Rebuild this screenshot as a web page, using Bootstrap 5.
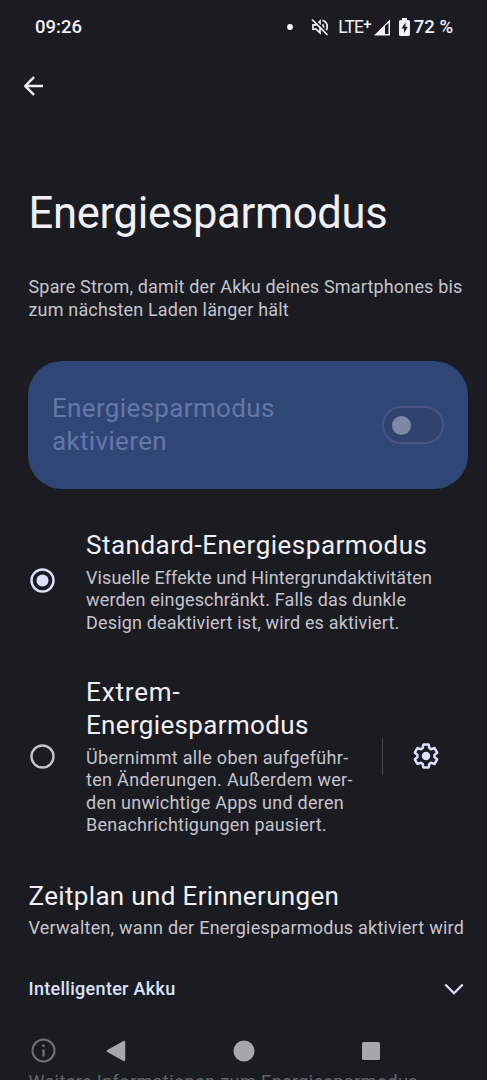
<!DOCTYPE html>
<html lang="de">
<head>
<meta charset="utf-8">
<meta name="viewport" content="width=device-width, initial-scale=1">
<title>Energiesparmodus</title>
<link rel="stylesheet" href="https://cdn.jsdelivr.net/npm/bootstrap@5.3.0/dist/css/bootstrap.min.css">
<style>
  body { background:#1b1c21; color:#f1f0f7; font-family:Roboto,"Liberation Sans",sans-serif; }
  .screen { width:487px; height:1080px; background:#1b1c21; }
  .screen svg { display:block; flex:none; }
  .statusbar { height:54px; padding:0 34px 0 35px; font-size:18.5px; font-weight:500; line-height:54px; }
  .notif { margin-right:18px; }
  .network { font-size:17.5px; font-weight:400; letter-spacing:-.8px; margin:0 3px 0 9px; }
  .network sup { font-size:15px; top:-.28em; font-weight:500; }
  .charge { margin:0 4px 0 8px; }
  .toolbar { height:64px; padding:0 24px; }
  .page-title { font-size:43.5px; line-height:56px; font-weight:400; letter-spacing:-.28px; margin:68px 0 0; padding-left:28.5px; white-space:nowrap; }
  .copy { font-size:18px; line-height:22.5px; letter-spacing:.17px; color:#c5c4cd; margin:0; }
  .copy span, .heading26 span { display:table; white-space:nowrap; }
  .copy .loose { letter-spacing:.31px; }
  .copy .mid { letter-spacing:.24px; }
  .copy .tight { letter-spacing:.12px; }
  .heading26 { font-size:26px; line-height:33px; font-weight:400; letter-spacing:.34px; margin:0; }
  .heading26 .loose { letter-spacing:.5px; }
  .heading26 .looser { letter-spacing:.85px; }
  .heading26 + .copy { margin-top:4.5px; }
  .intro { margin:34px 0 0 28.5px; }
  .main-switch { margin:40px 19px 0 28px; height:128px; border-radius:34px; background:#304677; padding:0 24px; color:#6577a9; }
  .toggle { width:62px; height:38px; border:2px solid #475485; border-radius:19px; background:#31426f; padding-left:8px; }
  .knob { width:19px; height:19px; background:#7d87a8; }
  .choice { padding-left:28px; margin-top:42px; }
  .choice-mark { width:58px; padding-left:2px; }
  .choice-text { width:296px; }
  .choice.active { margin-top:40px; }
  .choice.active .choice-mark { padding-bottom:2px; }
  .split { width:1px; height:37px; background:#45464f; margin-right:30px; }
  .schedule { padding:43px 0 0 28.5px; }
  .smart { font-size:18px; font-weight:500; line-height:24px; letter-spacing:.3px; color:#dde1ff; padding:37px 23px 0 28.5px; }
  .hint { padding:37px 0 0 28.5px; }
  .hint .copy { margin-top:8.5px; color:#63646f; letter-spacing:.42px; }
  .hint svg { margin-left:2px; }
  .navkeys { height:58px; padding:0 107px 0 106px; }
  .navkeys .home { margin-right:1px; }
</style>
</head>
<body>
<div class="screen position-relative overflow-hidden">
  <header class="statusbar d-flex align-items-center">
    <span class="me-auto">09:26</span>
    <svg class="notif" width="6" height="6"><circle cx="3" cy="3" r="2.9" fill="#fff"/></svg>
    <svg width="18" height="18" viewBox="0 0 18 18" fill="none" stroke="#f1f0f7" stroke-width="1.700"><path d="M2 6.800h3l4-3.600v11.600l-4-3.600H2zM11.500 6.200q2.200 2.800 0 5.600M11.500 2.300q5 1.900 4.700 6.700-.1 2-1 3.500"/><path d="M2.500 .8l15 15" stroke="#1b1c21" stroke-width="1.600"/><path d="M1 1.500l15.500 15.500"/></svg>
    <span class="network">LTE<sup>+</sup></span>
    <svg width="17" height="17" viewBox="0 0 17 17"><path d="M0 16.500L16 .5v16zM11 7v8h3.500V4z" fill-rule="evenodd" fill="#f1f0f7"/></svg>
    <svg class="charge" width="11" height="18" viewBox="0 0 11 18"><path d="M3 0h5v2h1.500Q11 2 11 3.500v13Q11 18 9.500 18h-8Q0 18 0 16.500v-13Q0 2 1.500 2H3z" fill="#f1f0f7"/><path d="M6.500 4.500L2.500 10.500h2.500V15l3.700-6H6.500z" fill="#1b1c21"/></svg>
    <span>72 %</span>
  </header>
  <div class="toolbar d-flex align-items-center"><svg width="20" height="20" viewBox="0 0 20 20" fill="none" stroke="#f1f0f7" stroke-width="2.400"><path d="M19 10H1.500M10 1.200L1.300 10l8.700 8.800"/></svg></div>
  <h1 class="page-title">Energiesparmodus</h1>
  <p class="copy intro"><span>Spare Strom, damit der Akku deines Smartphones bis</span><span>zum nächsten Laden länger hält</span></p>
  <section class="main-switch d-flex align-items-center justify-content-between">
    <h2 class="heading26"><span>Energiesparmodus</span><span>aktivieren</span></h2>
    <div class="toggle d-flex align-items-center"><div class="knob rounded-circle"></div></div>
  </section>
  <section class="choice active d-flex align-items-center">
    <div class="choice-mark"><svg width="25" height="25"><circle cx="12.500" cy="12.500" r="11" fill="none" stroke="#dde1ff" stroke-width="2.400"/><circle cx="12.500" cy="12.500" r="6" fill="#dde1ff"/></svg></div>
    <div><h2 class="heading26"><span class="loose">Standard-Energiesparmodus</span></h2>
    <p class="copy"><span class="tight">Visuelle Effekte und Hintergrundaktivitäten</span><span>werden eingeschränkt. Falls das dunkle</span><span>Design deaktiviert ist, wird es aktiviert.</span></p></div>
  </section>
  <section class="choice d-flex align-items-center">
    <div class="choice-mark"><svg width="25" height="25"><circle cx="12.500" cy="12.500" r="11" fill="none" stroke="#c5c4cd" stroke-width="2.400"/></svg></div>
    <div class="choice-text"><h2 class="heading26"><span class="looser">Extrem-</span><span>Energiesparmodus</span></h2>
    <p class="copy"><span class="loose">Übernimmt alle oben aufgeführ-</span><span class="loose">ten Änderungen. Außerdem wer-</span><span class="mid">den unwichtige Apps und deren</span><span class="mid">Benachrichtigungen pausiert.</span></p></div>
    <div class="split"></div>
    <svg width="26" height="26" viewBox="0.600 0.600 22.800 22.800"><path d="M19.430 12.980c.04-.32.07-.64.07-.98 0-.34-.03-.66-.07-.98l2.110-1.650c.19-.15.24-.42.12-.64l-2-3.460c-.09-.16-.26-.25-.44-.25-.06 0-.12.01-.17.03l-2.490 1c-.52-.4-1.080-.73-1.690-.98l-.38-2.650C14.460 2.180 14.250 2 14 2h-4c-.25 0-.46.18-.49.42l-.38 2.650c-.61.25-1.170.59-1.690.98l-2.490-1c-.06-.02-.12-.03-.18-.03-.17 0-.34.09-.43.25l-2 3.460c-.13.22-.07.49.12.64l2.110 1.650c-.04.32-.07.65-.07.98 0 .33.03.66.07.98l-2.110 1.650c-.19.15-.24.42-.12.64l2 3.460c.09.16.26.25.44.25.06 0 .12-.01.17-.03l2.490-1c.52.4 1.080.73 1.690.98l.38 2.650c.03.24.24.42.49.42h4c.25 0 .46-.18.49-.42l.38-2.650c.61-.25 1.170-.59 1.690-.98l2.490 1c.06.02.12.03.18.03.17 0 .34-.09.43-.25l2-3.460c.12-.22.07-.49-.12-.64z" fill="none" stroke="#dde1ff" stroke-width="2.200" stroke-linejoin="round"/><circle cx="12" cy="12" r="3.700" fill="#dde1ff"/></svg>
  </section>
  <section class="schedule"><h2 class="heading26"><span>Zeitplan und Erinnerungen</span></h2><p class="copy"><span class="mid">Verwalten, wann der Energiesparmodus aktiviert wird</span></p></section>
  <div class="smart d-flex align-items-center justify-content-between"><span>Intelligenter Akku</span><svg width="20" height="12" viewBox="0 0 20 12" fill="none" stroke="#dde1ff" stroke-width="2.300"><path d="M1.300 1.500L10 10.200l8.700-8.700"/></svg></div>
  <section class="hint">
    <svg width="25" height="25" fill="none" stroke="#6f707a" stroke-width="2"><circle cx="12.500" cy="12.500" r="11"/><path d="M12.500 11.500v7M12.500 6.500v2.500" stroke-width="2.300"/></svg>
    <p class="copy"><span>Weitere Informationen zum Energiesparmodus</span></p>
  </section>
  <nav class="navkeys position-absolute bottom-0 start-0 w-100 d-flex align-items-center justify-content-between">
    <svg width="20" height="22" viewBox="0 0 20 22"><path d="M2 11L18 2v18z" fill="#a6a7aa" stroke="#a6a7aa" stroke-width="2.500" stroke-linejoin="round"/></svg>
    <svg class="home" width="22" height="22"><circle cx="11" cy="11" r="10.500" fill="#a6a7aa"/></svg>
    <svg width="18" height="18"><rect width="18" height="18" rx="1.500" fill="#a6a7aa"/></svg>
  </nav>
</div>
<script src="https://cdn.jsdelivr.net/npm/bootstrap@5.3.0/dist/js/bootstrap.bundle.min.js"></script>
</body>
</html>
